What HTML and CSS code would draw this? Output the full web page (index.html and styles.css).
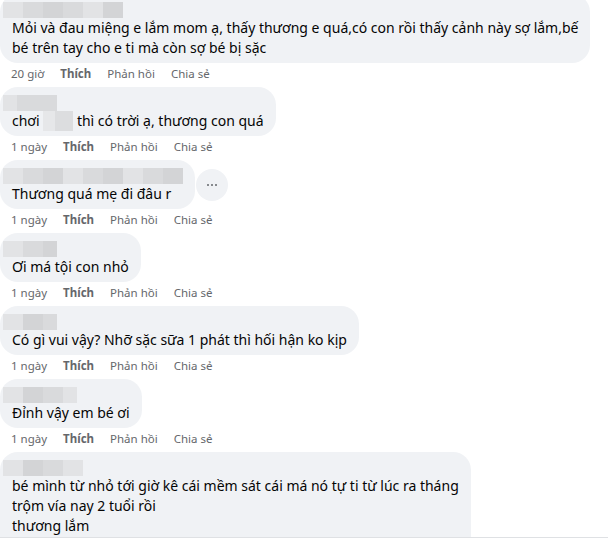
FILE: index.html
```html
<!DOCTYPE html>
<html lang="vi">
<head>
<meta charset="UTF-8">
<meta name="viewport" content="width=device-width, initial-scale=1.0">
<title>Bình luận</title>
<link rel="stylesheet" href="styles.css">
</head>
<body>

<div class="thread">

  <div class="comment first">
    <div class="bubble">
      <div class="name"><span class="b2"></span><span class="b3"></span><span class="b1"></span><span class="b3"></span><span class="b2"></span><span class="b1"></span></div>
      <div class="text">Mỏi và đau miệng e lắm mom ạ, thấy thương e quá,có con rồi thấy cảnh này sợ lắm,bế<br>bé trên tay cho e ti mà còn sợ bé bị sặc</div>
    </div>
    <div class="meta"><span class="time">20 giờ</span><span class="like">Thích</span><span>Phản hồi</span><span>Chia sẻ</span></div>
  </div>

  <div class="comment">
    <div class="bubble">
      <div class="name"><span class="b2 short"></span><span class="b3"></span><span class="b3"></span></div>
      <div class="text">chơi <span class="hidden-word"></span> thì có trời ạ, thương con quá</div>
    </div>
    <div class="meta"><span class="time">1 ngày</span><span class="like">Thích</span><span>Phản hồi</span><span>Chia sẻ</span></div>
  </div>

  <div class="comment">
    <div class="row">
      <div class="bubble">
        <div class="name"><span class="b2"></span><span class="b3"></span><span class="b1"></span><span class="b2"></span><span class="b3"></span><span class="b1"></span><span class="b2"></span><span class="b3"></span><span class="b1"></span></div>
        <div class="text">Thương quá mẹ đi đâu r</div>
      </div>
      <button class="more" type="button"><span></span><span></span><span></span></button>
    </div>
    <div class="meta"><span class="time">1 ngày</span><span class="like">Thích</span><span>Phản hồi</span><span>Chia sẻ</span></div>
  </div>

  <div class="comment">
    <div class="bubble">
      <div class="name"><span class="b2"></span><span class="b3"></span><span class="b1 short"></span></div>
      <div class="text">Ơi má tội con nhỏ</div>
    </div>
    <div class="meta"><span class="time">1 ngày</span><span class="like">Thích</span><span>Phản hồi</span><span>Chia sẻ</span></div>
  </div>

  <div class="comment">
    <div class="bubble">
      <div class="name"><span class="b2"></span><span class="b1"></span><span class="b3 short"></span></div>
      <div class="text">Có gì vui vậy? Nhỡ sặc sữa 1 phát thì hối hận ko kịp</div>
    </div>
    <div class="meta"><span class="time">1 ngày</span><span class="like">Thích</span><span>Phản hồi</span><span>Chia sẻ</span></div>
  </div>

  <div class="comment">
    <div class="bubble">
      <div class="name"><span class="b2"></span><span class="b1"></span><span class="b3"></span><span class="b2 short"></span></div>
      <div class="text">Đỉnh vậy em bé ơi</div>
    </div>
    <div class="meta"><span class="time">1 ngày</span><span class="like">Thích</span><span>Phản hồi</span><span>Chia sẻ</span></div>
  </div>

  <div class="comment">
    <div class="bubble last">
      <div class="name"><span class="b2"></span><span class="b1"></span><span class="b3"></span><span class="b2"></span></div>
      <div class="text">bé mình từ nhỏ tới giờ kê cái mềm sát cái má nó tự ti từ lúc ra tháng<br>trộm vía nay 2 tuổi rồi<br>thương lắm</div>
    </div>
  </div>

</div>

</body>
</html>
```

FILE: styles.css
```css
body {
  margin: 0;
  background-color: #fff;
  font-family: "Noto Sans", "Open Sans", sans-serif;
  color: #050505;
}
.thread {
  height: 537px;
  overflow: hidden;
  border-bottom: 1px solid #dfe1e4;
}
.comment {
  display: flex;
  flex-direction: column;
  align-items: flex-start;
}
.comment.first {
  margin-top: -6px;
}
.row {
  display: flex;
  align-items: center;
  gap: 1px;
}
.bubble {
  background-color: #f0f2f5;
  border-radius: 18px;
  padding: 8px 12px 5px 12px;
}
.bubble.last {
  padding-bottom: 20px;
}
.name {
  display: flex;
  height: 16px;
  margin-left: -9px;
}
.name span {
  display: block;
  width: 20px;
  height: 16px;
}
.name span.short {
  width: 14px;
}
.b1 { background-color: #d3d4d6; }
.b2 { background-color: #e2e3e5; }
.b3 { background-color: #d9dadc; }
.text {
  font-size: 14px;
  line-height: 20px;
  white-space: nowrap;
}
.hidden-word {
  display: inline-block;
  width: 30px;
  height: 20px;
  vertical-align: top;
  background: linear-gradient(90deg, #e6e7e9 0 40%, #dcdddf 40% 100%);
}
.meta {
  display: flex;
  gap: 16px;
  padding: 3px 0 5px 11px;
  font-size: 11.5px;
  line-height: 16px;
  color: #65676b;
}
.meta .like {
  font-weight: bold;
}
.more {
  width: 32px;
  height: 32px;
  border: none;
  border-radius: 50%;
  background-color: #f0f2f5;
  display: flex;
  align-items: center;
  justify-content: center;
  gap: 2px;
  padding: 0;
}
.more span {
  width: 2px;
  height: 2px;
  border-radius: 50%;
  background-color: #65676b;
}
```
